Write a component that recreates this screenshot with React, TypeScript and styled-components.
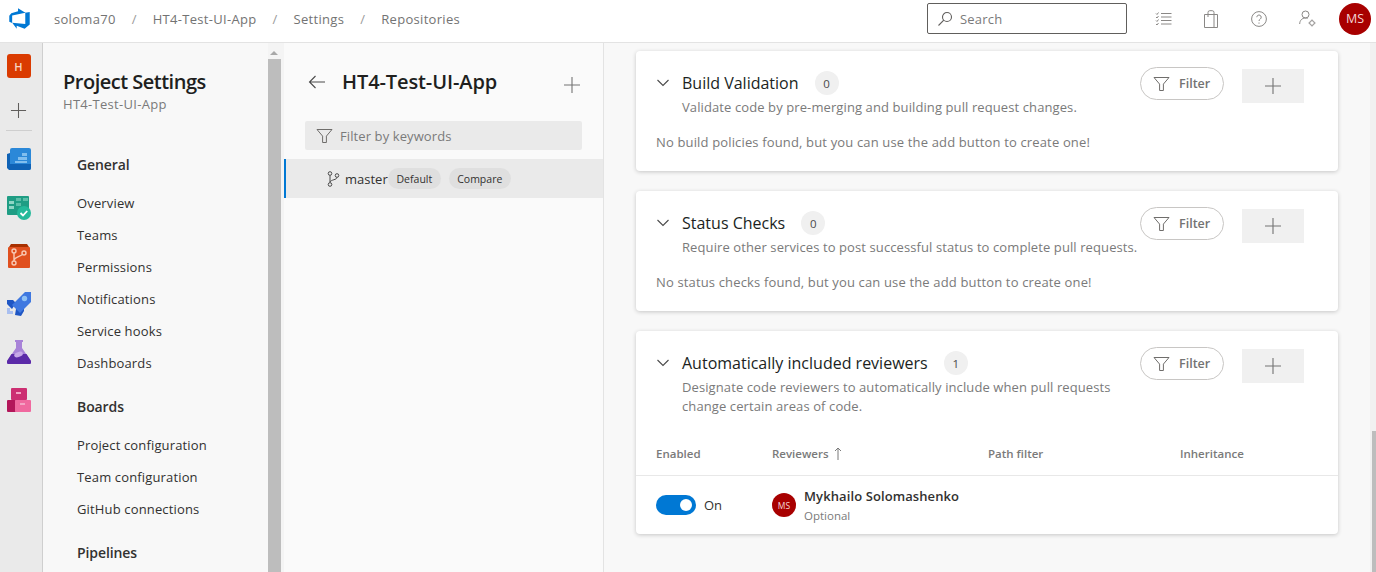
import React from "react";
import styled, { createGlobalStyle } from "styled-components";

const Global = createGlobalStyle`
  html, body { margin: 0; padding: 0; height: 100%; overflow: hidden; }
  body { font-family: "Open Sans", "Noto Sans", sans-serif; background: #f8f8f8; color: #201f1e; }
  * { box-sizing: border-box; }
`;

const Page = styled.div`
  width: 1376px;
  height: 572px;
  display: flex;
  flex-direction: column;
  overflow: hidden;
`;

const TopBar = styled.header`
  height: 43px;
  flex: none;
  background: #fff;
  border-bottom: 1px solid #e3e3e3;
  display: flex;
  align-items: center;
  padding: 0 5px 5px 8px;
`;

const Logo = styled.svg`
  width: 23px;
  height: 23px;
  flex: none;
`;

const Crumbs = styled.nav`
  display: flex;
  align-items: center;
  margin-left: 23px;
  font-size: 13px;
  letter-spacing: 0.3px;
  color: #737373;
  flex: 1;
`;

const Slash = styled.span`
  margin: 0 16px;
  color: #9a9a9a;
`;

const SearchBox = styled.div`
  width: 200px;
  height: 31px;
  border: 1px solid #605e5c;
  border-radius: 2px;
  display: flex;
  align-items: center;
  gap: 7px;
  padding-left: 9px;
  font-size: 13px;
  letter-spacing: 0.2px;
  color: #7a7a7a;
`;

const TopIcons = styled.div`
  display: flex;
  align-items: center;
  margin-left: 12px;
  margin-right: 8px;
  color: #8a8886;
`;

const TopIcon = styled.div`
  width: 48px;
  display: flex;
  justify-content: center;
`;

const Avatar = styled.div<{ $size: number; $font: number }>`
  width: ${(p) => p.$size}px;
  height: ${(p) => p.$size}px;
  border-radius: 50%;
  background: #a80000;
  color: #f3d6d6;
  font-size: ${(p) => p.$font}px;
  display: flex;
  align-items: center;
  justify-content: center;
  flex: none;
`;

const Body = styled.div`
  flex: 1;
  min-height: 0;
  display: flex;
`;

const Rail = styled.aside`
  width: 43px;
  flex: none;
  background: #eaeaea;
  border-right: 1px solid #cfcfcf;
  display: flex;
  flex-direction: column;
  align-items: center;
  padding: 11px 5px 0 0;
`;

const ProjectTile = styled.div`
  width: 24px;
  height: 24px;
  background: #da3b01;
  border-radius: 3px;
  color: #f7d4c4;
  font-size: 11px;
  font-weight: 600;
  display: flex;
  align-items: center;
  justify-content: center;
`;

const RailPlus = styled.div`
  margin-top: 22px;
  height: 20px;
  display: flex;
  align-items: center;
  color: #605e5c;
`;

const RailRule = styled.div`
  width: 26px;
  height: 1px;
  background: #cfcfcf;
  margin: 10px 0 17px;
`;

const RailIcon = styled.svg`
  width: 24px;
  height: 24px;
  margin-bottom: 24px;
  flex: none;
`;

const SideNav = styled.aside`
  width: 225px;
  flex: none;
  background: #f8f8f8;
  padding: 25px 0 0 20px;
  overflow: hidden;
`;

const SideTitle = styled.h1`
  margin: 0;
  font-size: 20px;
  line-height: 28px;
  font-weight: 600;
  letter-spacing: -0.5px;
  color: #201f1e;
`;

const SideSub = styled.div`
  font-size: 13px;
  letter-spacing: 0.3px;
  line-height: 16px;
  color: #7a7a7a;
`;

const NavGroup = styled.div`
  padding-left: 14px;
  margin-top: 37px;
`;

const NavHead = styled.div`
  font-size: 14px;
  font-weight: 600;
  line-height: 32px;
  letter-spacing: -0.1px;
  color: #323130;
  margin-bottom: 6px;
`;

const NavItem = styled.div`
  font-size: 13px;
  letter-spacing: 0.15px;
  line-height: 32px;
  color: #323130;
`;

const NavSection = styled.div`
  & + & {
    margin-top: 12px;
  }
`;

const ScrollTrack = styled.div`
  width: 16px;
  flex: none;
  background: #f4f4f4;
  display: flex;
  flex-direction: column;
  align-items: flex-start;
`;

const ArrowUp = styled.div`
  width: 0;
  height: 0;
  margin: 8px 0 0 2px;
  border-left: 4px solid transparent;
  border-right: 4px solid transparent;
  border-bottom: 4px solid #a8a8a8;
`;

const ScrollThumb = styled.div`
  width: 13px;
  flex: 1;
  margin-top: 4px;
  background: #bdbdbd;
`;

const RepoPanel = styled.section`
  width: 320px;
  flex: none;
  background: #fafafa;
  border-right: 1px solid #e3e3e3;
`;

const RepoHead = styled.div`
  display: flex;
  align-items: center;
  height: 40px;
  margin-top: 19px;
  padding: 0 22px 0 24px;
`;

const RepoTitle = styled.h2`
  margin: 0 0 2px 16px;
  flex: 1;
  font-size: 20px;
  font-weight: 600;
  letter-spacing: -0.1px;
  color: #201f1e;
`;

const RepoAdd = styled.span`
  display: flex;
  margin-top: 6px;
  color: #737373;
`;

const FilterBar = styled.div`
  margin: 19px 21px 0 21px;
  height: 29px;
  background: #eaeaea;
  border-radius: 2px;
  display: flex;
  align-items: center;
  gap: 7px;
  padding-left: 11px;
  font-size: 13px;
  letter-spacing: 0.1px;
  color: #7a7a7a;
`;

const BranchRow = styled.div`
  margin-top: 9px;
  height: 39px;
  background: #eaeaea;
  border-left: 2px solid #0078d4;
  display: flex;
  align-items: center;
  padding-left: 41px;
`;

const BranchName = styled.span`
  font-size: 13px;
  color: #323130;
  margin-left: 5px;
  width: 43px;
  flex: none;
`;

const Tag = styled.span`
  height: 21px;
  padding: 0 8.5px;
  border-radius: 11px;
  background: #dfdfdf;
  font-size: 10.5px;
  color: #323130;
  display: flex;
  align-items: center;
  margin-right: 8px;
`;

const Main = styled.main`
  flex: 1;
  min-width: 0;
  display: flex;
  background: #f8f8f8;
`;

const CardColumn = styled.div`
  width: 702px;
  margin-left: 32px;
  margin-top: 8px;
  display: flex;
  flex-direction: column;
  gap: 20px;
`;

const Card = styled.article`
  background: #fff;
  border-radius: 4px;
  box-shadow: 0 1px 4px rgba(0, 0, 0, 0.2);
  padding: 0 34px 0 20px;
`;

const CardHead = styled.div`
  display: flex;
  align-items: flex-start;
`;

const Chevron = styled.svg`
  width: 14px;
  height: 14px;
  margin-top: 25px;
  flex: none;
`;

const CardText = styled.div`
  margin-left: 12px;
  flex: 1;
  min-width: 0;
  padding-top: 20px;
`;

const TitleLine = styled.div`
  display: flex;
  align-items: center;
  height: 24px;
  margin-bottom: 3px;
`;

const CardTitle = styled.h3`
  margin: 0;
  font-size: 16px;
  font-weight: 400;
  color: #201f1e;
`;

const Count = styled.span`
  width: 24px;
  height: 24px;
  margin-left: 16px;
  border-radius: 50%;
  background: #f0f0f0;
  font-size: 11.5px;
  color: #4a4a4a;
  display: flex;
  align-items: center;
  justify-content: center;
`;

const CardDesc = styled.p`
  margin: 0;
  width: 445px;
  font-size: 13px;
  letter-spacing: 0.1px;
  line-height: 19px;
  color: #7a7a7a;
  white-space: pre-line;
`;

const WideDesc = styled(CardDesc)`
  width: auto;
`;

const CardActions = styled.div`
  display: flex;
  align-items: flex-start;
  gap: 18px;
  padding-top: 16px;
`;

const FilterPill = styled.div`
  width: 84px;
  height: 33px;
  border: 1px solid #c8c6c4;
  border-radius: 17px;
  display: flex;
  align-items: center;
  gap: 9px;
  padding-left: 12px;
  font-size: 12.5px;
  font-weight: 600;
  color: #737373;
`;

const AddButton = styled.div`
  width: 62px;
  height: 34px;
  margin-top: 2px;
  background: #f0f0f0;
  display: flex;
  align-items: center;
  justify-content: center;
  color: #737373;
`;

const EmptyNote = styled.p`
  margin: 16px 0 0;
  padding-bottom: 19px;
  font-size: 13px;
  letter-spacing: 0.15px;
  line-height: 19px;
  color: #7a7a7a;
`;

const TableHead = styled.div`
  display: grid;
  grid-template-columns: 116px 216px 192px 1fr;
  margin: 24px -34px 0 -20px;
  padding: 0 20px 9px;
  height: 36px;
  align-items: center;
  border-bottom: 1px solid #e8e8e8;
  font-size: 11.5px;
  font-weight: 600;
  color: #7a7a7a;
`;

const HeadCell = styled.div`
  display: flex;
  align-items: center;
  gap: 5px;
`;

const TableRow = styled.div`
  display: grid;
  grid-template-columns: 116px 1fr;
  height: 58px;
  align-items: center;
`;

const ToggleCell = styled.div`
  display: flex;
  align-items: center;
  gap: 8px;
  font-size: 13px;
  color: #323130;
`;

const Toggle = styled.div`
  width: 40px;
  height: 20px;
  border-radius: 10px;
  background: #0078d4;
  display: flex;
  align-items: center;
  justify-content: flex-end;
  padding-right: 4px;
`;

const Knob = styled.div`
  width: 12px;
  height: 12px;
  border-radius: 50%;
  background: #fff;
`;

const Person = styled.div`
  display: flex;
  align-items: center;
  gap: 8px;
`;

const PersonText = styled.div`
  padding-top: 2px;
`;

const PersonName = styled.div`
  font-size: 13px;
  font-weight: 600;
  line-height: 20px;
  letter-spacing: 0.1px;
  color: #323130;
`;

const PersonRole = styled.div`
  font-size: 11.5px;
  line-height: 20px;
  color: #7a7a7a;
`;

const MainScroll = styled.div`
  margin-left: auto;
  width: 6px;
  flex: none;
  background: #f1f1f1;
  display: flex;
  flex-direction: column;
  justify-content: flex-end;
  align-items: flex-end;
`;

const MainThumb = styled.div`
  width: 4px;
  height: 141px;
  background: #bdbdbd;
`;

function PlusIcon({ size = 18 }: { size?: number }) {
  return (
    <svg width={size} height={size} viewBox="0 0 18 18" fill="none" stroke="currentColor" strokeWidth="1.1">
      <path d="M9 1v16M1 9h16" />
    </svg>
  );
}

function FunnelIcon() {
  return (
    <svg width="17" height="16" viewBox="0 0 17 16" fill="none" stroke="#6f6d6b" strokeWidth="1">
      <path d="M1 1.5h15l-5.6 6.6v6.4H6.6V8.1z" />
    </svg>
  );
}

function CardButtons() {
  return (
    <CardActions>
      <FilterPill>
        <FunnelIcon />
        Filter
      </FilterPill>
      <AddButton>
        <PlusIcon />
      </AddButton>
    </CardActions>
  );
}

function ChevronDown() {
  return (
    <Chevron viewBox="0 0 14 14" fill="none" stroke="#4a4a4a" strokeWidth="1.1">
      <path d="M1.5 4L7 9.5 12.5 4" />
    </Chevron>
  );
}

const general = ["Overview", "Teams", "Permissions", "Notifications", "Service hooks", "Dashboards"];
const boards = ["Project configuration", "Team configuration", "GitHub connections"];

export default function App() {
  return (
    <Page>
      <Global />
      <TopBar>
        <Logo viewBox="0 0 18 18">
          <path
            fill="#0078d4"
            d="M17 4v9.74l-4 3.28-6.2-2.26V17l-3.51-4.59 10.23.8V4.44zm-3.41.49L7.85 1v2.33L2.58 4.88 1 6.91v4.61l2.26 1V6.57z"
          />
        </Logo>
        <Crumbs>
          soloma70<Slash>/</Slash>HT4-Test-UI-App<Slash>/</Slash>Settings<Slash>/</Slash>Repositories
        </Crumbs>
        <SearchBox>
          <svg width="16" height="16" viewBox="0 0 16 16" fill="none" stroke="#605e5c" strokeWidth="1.1">
            <circle cx="10" cy="6" r="4.5" />
            <path d="M6.8 9.2L1.5 14.5" />
          </svg>
          Search
        </SearchBox>
        <TopIcons>
          <TopIcon>
            <svg width="17" height="16" viewBox="0 0 17 16" fill="none" stroke="currentColor" strokeWidth="1">
              <path d="M6 2.5h10.5M6 6h10.5M6 9.5h10.5M6 13h10.5M1 2.5l1 1 1.5-2M1 6l1 1 1.5-2M1 9.5l1 1 1.5-2M1 13l1 1 1.5-2" />
            </svg>
          </TopIcon>
          <TopIcon>
            <svg width="14" height="18" viewBox="0 0 14 18" fill="none" stroke="currentColor" strokeWidth="1">
              <path d="M.5 4.5h13v13H.5zM4 7V2.5a1.8 1.8 0 0 1 1.8-1.8h2.4A1.8 1.8 0 0 1 10 2.5V17" />
            </svg>
          </TopIcon>
          <TopIcon>
            <svg width="16" height="16" viewBox="0 0 16 16" fill="none" stroke="currentColor" strokeWidth="1">
              <circle cx="8" cy="8" r="7.4" />
              <path d="M5.8 6.2a2.2 2.2 0 1 1 3.5 1.8c-.8.5-1.3 1-1.3 2M8 11.5v1.2" />
            </svg>
          </TopIcon>
          <TopIcon>
            <svg width="17" height="17" viewBox="0 0 17 17" fill="none" stroke="currentColor" strokeWidth="1">
              <circle cx="6.5" cy="4.5" r="3.5" />
              <path d="M.7 14c0-3.5 2.3-6 5.8-6 .8 0 1.5.1 2.1.4" />
              <circle cx="13" cy="13" r="2.3" />
              <path d="M13 9.5v1.2M13 15.3v1.2M9.5 13h1.2M15.3 13h1.2" />
            </svg>
          </TopIcon>
        </TopIcons>
        <Avatar $size={32} $font={12.5}>
          MS
        </Avatar>
      </TopBar>
      <Body>
        <Rail>
          <ProjectTile>H</ProjectTile>
          <RailPlus>
            <PlusIcon size={17} />
          </RailPlus>
          <RailRule />
          <RailIcon viewBox="0 0 24 24">
            <path fill="#0f62b5" d="M0 6l6-2v18H2l-2-2z" />
            <rect x="3" y="0" width="21" height="22" rx="2" fill="#2b88d8" />
            <path fill="#9fd0f5" d="M15 5h5v3h-5zM11 9h9v3h-9zM8 13h12v2H8z" opacity=".75" />
            <path fill="#0f62b5" d="M3 16h21v4a2 2 0 0 1-2 2H3z" />
          </RailIcon>
          <RailIcon viewBox="0 0 24 24">
            <rect x="0" y="0" width="22" height="19" rx="1" fill="#1f9d84" />
            <path fill="#8fd6c5" d="M2 5h5v3H2zM2 10h5v3H2z" />
            <path fill="#5dbfa9" d="M9 2h5v3H9zM16 2h5v3h-5zM9 7h5v3H9z" />
            <circle cx="17" cy="17" r="7" fill="#25b99a" />
            <path d="M13.5 17l2.5 2.5 4.2-4.5" fill="none" stroke="#fff" strokeWidth="1.8" />
          </RailIcon>
          <RailIcon viewBox="0 0 24 24">
            <path fill="#a83000" d="M4 0h16l2 3H2z" />
            <rect x="1" y="3" width="22" height="21" rx="1" fill="#e0501f" />
            <g fill="none" stroke="#f8c9b4" strokeWidth="1.4">
              <circle cx="7" cy="7" r="2" />
              <circle cx="7" cy="19" r="2" />
              <circle cx="17" cy="9" r="2" />
              <path d="M7 9v8M15.5 10.5C12 13 8 13 7 16" />
            </g>
          </RailIcon>
          <RailIcon viewBox="0 0 24 24">
            <path fill="#1f56c4" d="M9 10l8-1v10l-3 5-6-1 1-6zM0 8h6l3 3-4 6-5-5z" />
            <path fill="#3f78e0" d="M24 0v10L13 21l-8-8L16 2l2-2z" />
            <circle cx="17.5" cy="6.5" r="2.7" fill="#8fc1f4" />
            <path fill="#a9bff0" d="M0 16h3v3h3v3H0z" />
          </RailIcon>
          <RailIcon viewBox="0 0 24 24">
            <path fill="#a883d8" d="M8 0h8v2h-1v6l9 13a2 2 0 0 1-2 3H2a2 2 0 0 1-2-3l9-13V2H8z" />
            <path fill="#5b2aa8" d="M4.5 14h15L24 21a2 2 0 0 1-2 3H2a2 2 0 0 1-2-3z" />
            <ellipse cx="11.5" cy="14.5" rx="4.5" ry="2.5" fill="#c7a8e8" transform="rotate(-20 11.5 14.5)" />
          </RailIcon>
          <RailIcon viewBox="0 0 24 24">
            <rect x="4" y="0" width="16" height="12" rx="1" fill="#cc2f72" />
            <rect x="0" y="12" width="9" height="12" rx="1" fill="#b3175a" />
            <rect x="8" y="12" width="16" height="12" rx="1" fill="#f0699f" />
            <path fill="#f4a3c4" d="M9 4h5v2H9zM13 15h5v2h-5z" />
          </RailIcon>
        </Rail>
        <SideNav>
          <SideTitle>Project Settings</SideTitle>
          <SideSub>HT4-Test-UI-App</SideSub>
          <NavGroup>
            <NavSection>
              <NavHead>General</NavHead>
              {general.map((item) => (
                <NavItem key={item}>{item}</NavItem>
              ))}
            </NavSection>
            <NavSection>
              <NavHead>Boards</NavHead>
              {boards.map((item) => (
                <NavItem key={item}>{item}</NavItem>
              ))}
            </NavSection>
            <NavSection>
              <NavHead>Pipelines</NavHead>
            </NavSection>
          </NavGroup>
        </SideNav>
        <ScrollTrack>
          <ArrowUp />
          <ScrollThumb />
        </ScrollTrack>
        <RepoPanel>
          <RepoHead>
            <svg width="18" height="14" viewBox="0 0 18 14" fill="none" stroke="#4a4a4a" strokeWidth="1.1">
              <path d="M17 7H1.5M7.5 1L1.5 7l6 6" />
            </svg>
            <RepoTitle>HT4-Test-UI-App</RepoTitle>
            <RepoAdd>
              <PlusIcon />
            </RepoAdd>
          </RepoHead>
          <FilterBar>
            <FunnelIcon />
            Filter by keywords
          </FilterBar>
          <BranchRow>
            <svg width="13" height="16" viewBox="0 0 13 16" fill="none" stroke="#4a4a4a" strokeWidth="1">
              <circle cx="3" cy="2.5" r="1.8" />
              <circle cx="3" cy="13.5" r="1.8" />
              <circle cx="10" cy="4.5" r="1.8" />
              <path d="M3 4.3v7.4M10 6.3C10 9 4 8.5 3 11" />
            </svg>
            <BranchName>master</BranchName>
            <Tag>Default</Tag>
            <Tag>Compare</Tag>
          </BranchRow>
        </RepoPanel>
        <Main>
          <CardColumn>
            <Card>
              <CardHead>
                <ChevronDown />
                <CardText>
                  <TitleLine>
                    <CardTitle>Build Validation</CardTitle>
                    <Count>0</Count>
                  </TitleLine>
                  <WideDesc>Validate code by pre-merging and building pull request changes.</WideDesc>
                </CardText>
                <CardButtons />
              </CardHead>
              <EmptyNote>No build policies found, but you can use the add button to create one!</EmptyNote>
            </Card>
            <Card>
              <CardHead>
                <ChevronDown />
                <CardText>
                  <TitleLine>
                    <CardTitle>Status Checks</CardTitle>
                    <Count>0</Count>
                  </TitleLine>
                  <WideDesc>Require other services to post successful status to complete pull requests.</WideDesc>
                </CardText>
                <CardButtons />
              </CardHead>
              <EmptyNote>No status checks found, but you can use the add button to create one!</EmptyNote>
            </Card>
            <Card>
              <CardHead>
                <ChevronDown />
                <CardText>
                  <TitleLine>
                    <CardTitle>Automatically included reviewers</CardTitle>
                    <Count>1</Count>
                  </TitleLine>
                  <CardDesc>
                    {"Designate code reviewers to automatically include when pull requests\nchange certain areas of code."}
                  </CardDesc>
                </CardText>
                <CardButtons />
              </CardHead>
              <TableHead>
                <div>Enabled</div>
                <HeadCell>
                  Reviewers
                  <svg width="8" height="13" viewBox="0 0 8 13" fill="none" stroke="#7a7a7a" strokeWidth="1">
                    <path d="M4 13V1M1 4l3-3 3 3" />
                  </svg>
                </HeadCell>
                <div>Path filter</div>
                <div>Inheritance</div>
              </TableHead>
              <TableRow>
                <ToggleCell>
                  <Toggle>
                    <Knob />
                  </Toggle>
                  On
                </ToggleCell>
                <Person>
                  <Avatar $size={24} $font={8.5}>
                    MS
                  </Avatar>
                  <PersonText>
                    <PersonName>Mykhailo Solomashenko</PersonName>
                    <PersonRole>Optional</PersonRole>
                  </PersonText>
                </Person>
              </TableRow>
            </Card>
          </CardColumn>
          <MainScroll>
            <MainThumb />
          </MainScroll>
        </Main>
      </Body>
    </Page>
  );
}
